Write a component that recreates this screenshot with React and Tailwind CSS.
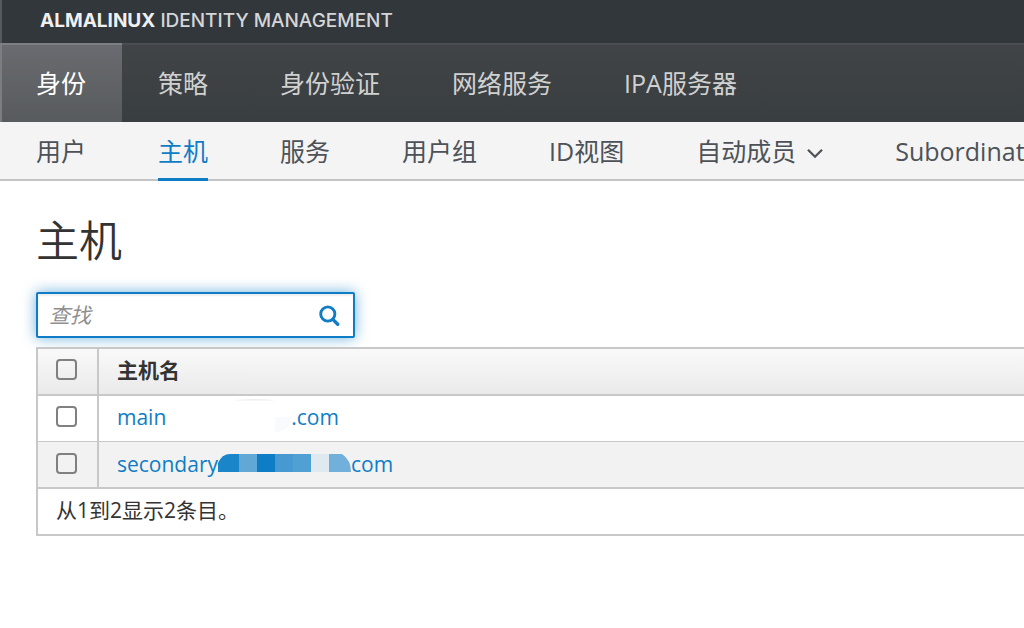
import React from "react";

const mainTabs = ["身份", "策略", "身份验证", "网络服务", "IPA服务器"];
const subTabs = ["用户", "主机", "服务", "用户组", "ID视图", "自动成员", "Subordinate IDs"];

function Chevron() {
  return (
    <svg className="ml-[11px] w-4 h-4 shrink-0" viewBox="0 0 16 16" fill="none" aria-hidden="true">
      <path d="M1 6.7 8 13.7 15 6.7" stroke="currentColor" strokeWidth="2.3" />
    </svg>
  );
}

function SearchIcon() {
  return (
    <svg className="w-[21px] h-[21px]" viewBox="0 0 21 21" fill="none" aria-hidden="true">
      <circle cx="8.8" cy="9" r="7.1" stroke="currentColor" strokeWidth="2.9" />
      <path d="M14.1 14.6 18.7 19.2" stroke="currentColor" strokeWidth="3.4" strokeLinecap="round" />
    </svg>
  );
}

function ErasedPatch() {
  return (
    <svg className="w-[125px] h-9 shrink-0" viewBox="0 0 125 36" aria-hidden="true">
      <path d="M69 1.5 Q75 0 90 0 Q103 0 108 1.5 Z" fill="#ededed" />
      <path d="M109 18H125Q125 32 109 33Z" fill="#f8fafe" />
    </svg>
  );
}

function MosaicPatch() {
  return (
    <svg className="w-[133px] h-5 shrink-0" viewBox="0 0 133 20" aria-hidden="true">
      <path d="M0 18V9Q4 0 12 0H21V18Z" fill="#1b85c9" />
      <rect x="21" width="18" height="18" fill="#62a8d7" />
      <rect x="39" width="18" height="18" fill="#0f7dc6" />
      <rect x="57" width="18" height="18" fill="#4799d1" />
      <rect x="75" width="18" height="18" fill="#51a0d4" />
      <rect x="93" width="18" height="18" fill="#dfe9f0" />
      <path d="M111 0H124Q133 6 133 18H111Z" fill="#72b0dc" />
    </svg>
  );
}

function Tick({ label }) {
  return (
    <input
      type="checkbox"
      aria-label={label}
      className="block appearance-none w-[21px] h-[21px] mx-auto rounded-[4px] border-2 border-[#808080] bg-transparent checked:bg-[#0088ce]"
    />
  );
}

export default function App() {
  return (
    <div className="min-h-screen overflow-hidden bg-white text-[#333] text-[21px] leading-[30px] font-['Open_Sans','Noto_Sans_CJK_SC',sans-serif]">
      <header>
        <div className="h-[43px] flex items-center pl-[38px] pb-0.5 bg-[#32373c] border-l-2 border-[#55585c] text-[19px] text-[#d4d6d8] font-['Inter',sans-serif] font-medium whitespace-nowrap">
          <span>
            <strong className="font-bold text-[#f0f0f0]">ALMALINUX</strong> IDENTITY MANAGEMENT
          </span>
        </div>
        <nav aria-label="主导航" className="flex h-[79px] border-t-2 border-[#4a4d51] bg-linear-to-b from-[#404447] to-[#393e40]">
          {mainTabs.map((tab, i) => (
            <a
              key={tab}
              href="#"
              className={
                i === 0
                  ? "flex items-center -mt-0.5 pb-0.5 px-9 whitespace-nowrap text-[25px] text-white border-t-2 border-t-[#7d7f83] shadow-[inset_2px_0_0_#7b7d80] bg-linear-to-b from-[#696b70] to-[#585b5d]"
                  : "flex items-center px-9 pb-0.5 whitespace-nowrap text-[25px] text-[#d1d1d1]"
              }
            >
              {tab}
            </a>
          ))}
        </nav>
        <nav aria-label="子导航" className="flex gap-[72px] h-[59px] px-9 border-b-2 border-[#c4c4c4] bg-[#f4f4f4]">
          {subTabs.map((tab) => (
            <a
              key={tab}
              href="#"
              className={
                tab === "主机"
                  ? "flex items-center -mb-0.5 pt-0.5 shrink-0 whitespace-nowrap text-[25px] text-[#0f7dc6] border-b-3 border-[#0f7dc6]"
                  : "flex items-center shrink-0 whitespace-nowrap text-[25px] text-[#4d5258]"
              }
            >
              {tab}
              {tab === "自动成员" && <Chevron />}
            </a>
          ))}
        </nav>
      </header>
      <main className="pl-9 pt-[31px]">
        <h1 className="text-[43px] leading-[58px] font-[350]">主机</h1>
        <form className="mt-[22px] flex w-[319px] h-[46px] items-center border-2 border-[#0f7dc6] rounded-[2px] bg-white pl-[11px] pr-[13px] shadow-[inset_0_2px_2px_rgba(0,0,0,0.07),0_0_14px_rgba(15,125,198,0.6)]">
          <input
            type="text"
            aria-label="查找"
            placeholder="查找"
            className="flex-1 min-w-0 bg-transparent outline-none text-[21px] placeholder:text-[#8f8f8f] placeholder:italic"
          />
          <button type="button" aria-label="搜索" className="text-[#0f7dc6]">
            <SearchIcon />
          </button>
        </form>
        <table className="mt-[9px] w-full border-separate border-spacing-0 border-[#c8c8c8] border-l-2 border-b-2">
          <thead>
            <tr className="h-[47px] bg-linear-to-b from-[#fafafa] to-[#eaeaea]">
              <th className="w-[61px] p-0 pr-0.5 pb-1 border-t-2 border-r-2 border-[#c8c8c8]">
                <Tick label="全选" />
              </th>
              <th className="pt-0 pb-1 px-[18px] text-left font-bold border-t-2 border-[#c8c8c8]">主机名</th>
            </tr>
          </thead>
          <tbody className="text-[#0f7dc6]">
            <tr className="h-[47px]">
              <td className="p-0 pr-0.5 pb-1 border-t-2 border-r-2 border-[#c8c8c8]">
                <Tick label="main" />
              </td>
              <td className="pt-0 pb-1 px-[18px] border-t-2 border-[#c8c8c8]">
                <a href="#" className="flex items-center">
                  main
                  <ErasedPatch />
                  .com
                </a>
              </td>
            </tr>
            <tr className="h-[46px] bg-[#f2f2f2]">
              <td className="p-0 pr-0.5 pb-0.5 border-t border-r-2 border-[#c8c8c8]">
                <Tick label="secondary" />
              </td>
              <td className="pt-0 pb-0.5 px-[18px] border-t border-[#c8c8c8]">
                <a href="#" className="flex items-center">
                  secondary
                  <MosaicPatch />
                  com
                </a>
              </td>
            </tr>
          </tbody>
          <tfoot>
            <tr className="h-[47px]">
              <td colSpan={2} className="pt-0 pb-1 px-[18px] border-t-2 border-[#c8c8c8]">
                从1到2显示2条目。
              </td>
            </tr>
          </tfoot>
        </table>
      </main>
    </div>
  );
}
